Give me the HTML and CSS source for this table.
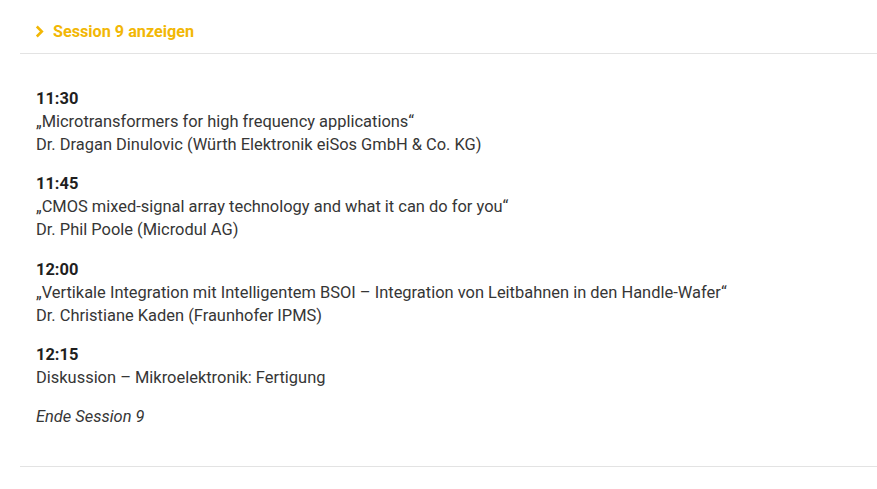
FILE: index.html
```html
<!DOCTYPE html>
<html lang="de">
<head>
<meta charset="utf-8">
<link rel="stylesheet" href="styles.css">
</head>
<body>
<div class="session">
  <div class="toggle">
    <svg class="chev" width="9" height="13" viewBox="0 0 9 13"><path d="M1.8 1.5 L6.8 6.5 L1.8 11.5" fill="none" stroke="#f2b705" stroke-width="2.6"/></svg>
    <span class="toggle-label">Session 9 anzeigen</span>
  </div>
  <div class="content">
    <div class="item">
      <div class="time">11:30</div>
      <div>„Microtransformers for high frequency applications“</div>
      <div>Dr. Dragan Dinulovic (Würth Elektronik eiSos GmbH &amp; Co. KG)</div>
    </div>
    <div class="item">
      <div class="time">11:45</div>
      <div>„CMOS mixed-signal array technology and what it can do for you“</div>
      <div>Dr. Phil Poole (Microdul AG)</div>
    </div>
    <div class="item">
      <div class="time">12:00</div>
      <div>„Vertikale Integration mit Intelligentem BSOI – Integration von Leitbahnen in den Handle-Wafer“</div>
      <div>Dr. Christiane Kaden (Fraunhofer IPMS)</div>
    </div>
    <div class="item">
      <div class="time">12:15</div>
      <div>Diskussion – Mikroelektronik: Fertigung</div>
    </div>
    <div class="item end">Ende Session 9</div>
  </div>
</div>
</body>
</html>
```
FILE: styles.css
```css
html, body { margin: 0; padding: 0; background: #fff; }
body { font-family: Roboto, "Noto Sans", sans-serif; font-size: 16.45px; color: #363636; }
.session { margin-left: 20px; }
.toggle {
  display: flex; align-items: center; gap: 9px;
  padding: 21px 0 10px 15px;
  line-height: 22px;
  border-bottom: 1px solid #e3e3e3;
}
.chev { display: block; margin-top: -1px; }
.toggle-label { color: #f2b705; font-weight: 700; font-size: 16.2px; }
.content {
  padding: 33px 0 38px 16px;
  border-bottom: 1px solid #e3e3e3;
  line-height: 23.1px;
}
.item { margin-bottom: 16px; }
.item:last-child { margin-bottom: 0; }
.time { font-weight: 700; color: #1f1f1f; }
.end { font-style: italic; }
```
